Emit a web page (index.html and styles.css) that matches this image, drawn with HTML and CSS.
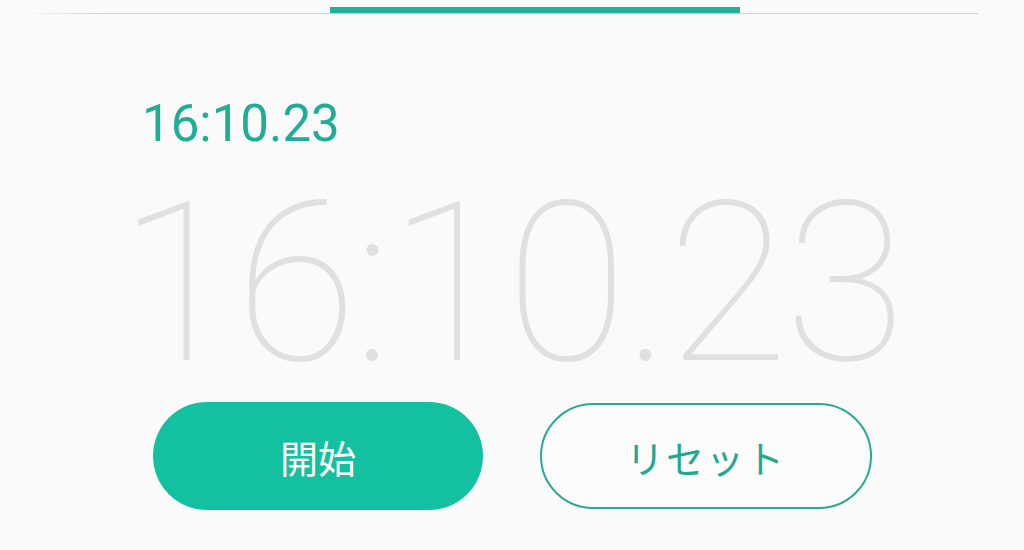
FILE: index.html
```html
<!DOCTYPE html>
<html lang="ja">
<head>
<meta charset="utf-8">
<link rel="stylesheet" href="styles.css">
</head>
<body>
<div class="tabbar">
  <div class="tab-line"></div>
  <div class="tab-indicator"></div>
</div>
<main class="stopwatch">
  <div class="lap-time">16:10.23</div>
  <div class="main-time">16:10.23</div>
  <div class="buttons">
    <button class="btn btn-start">開始</button>
    <button class="btn btn-reset">リセット</button>
  </div>
</main>
</body>
</html>
```
FILE: styles.css
```css
html, body {
  margin: 0;
  padding: 0;
  background: #fafafa;
  width: 1024px;
  height: 550px;
  overflow: hidden;
  font-family: Roboto, "Noto Sans CJK JP", sans-serif;
}
.tabbar {
  position: relative;
  height: 14px;
}
.tab-line {
  position: absolute;
  left: 25px;
  right: 46px;
  top: 13px;
  height: 1px;
  background: linear-gradient(to right, rgba(200,200,200,0) 0, #cfcfcf 80px, #cfcfcf 100%);
}
.tab-indicator {
  position: absolute;
  left: 330px;
  width: 410px;
  top: 7px;
  height: 6px;
  background: #26b097;
}
.stopwatch {
  display: flex;
  flex-direction: column;
}
.lap-time {
  margin-top: 80px;
  padding-left: 142px;
  font-size: 51px;
  line-height: 60px;
  color: #1fae95;
  font-weight: 400;
}
.main-time {
  margin-top: 12px;
  padding-left: 118px;
  font-size: 222px;
  line-height: 236px;
  font-weight: 100;
  color: #e0e0e0;
  letter-spacing: -4px;
  white-space: nowrap;
}
.buttons {
  display: flex;
  gap: 57px;
  padding-left: 153px;
}
.btn {
  font-family: "Noto Sans CJK JP", sans-serif;
  font-size: 38px;
  border-radius: 60px;
  cursor: pointer;
  box-sizing: border-box;
}
.btn-start {
  width: 330px;
  height: 108px;
  background: #13c1a1;
  color: #ffffff;
  border: none;
}
.btn-reset {
  width: 332px;
  height: 106px;
  margin-top: 1px;
  background: #fcfcfc;
  color: #22a891;
  border: 2px solid #27ab93;
  letter-spacing: 2px;
}
```
